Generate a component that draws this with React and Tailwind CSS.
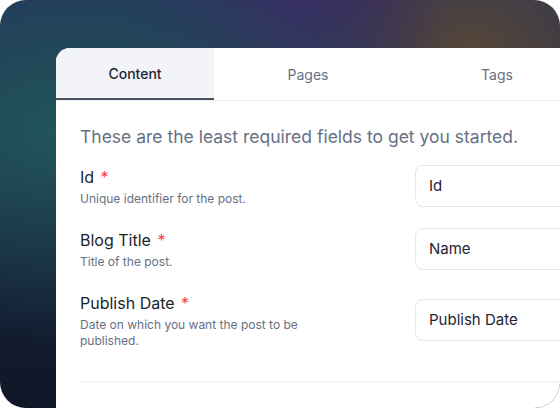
import React from 'react';

const fields = [
  { label: 'Id', hint: 'Unique identifier for the post.', placeholder: 'Id' },
  { label: 'Blog Title', hint: 'Title of the post.', placeholder: 'Name' },
  { label: 'Publish Date', hint: 'Date on which you want the post to be published.', placeholder: 'Publish Date' },
];

export default function App() {
  return (
    <div className="w-[560px] h-[408px] bg-white font-['Inter',sans-serif]">
      {/* Fondo con degradado */}
      <div className="w-[560px] h-[408px] overflow-hidden rounded-[26px] pl-[56px] pt-[48px] bg-[#131b2d] bg-[image:radial-gradient(ellipse_at_14%_32%,#22575c_0%,transparent_55%),radial-gradient(ellipse_at_52%_0%,#3a2763_0%,transparent_38%),radial-gradient(ellipse_at_84%_14%,#574737_0%,transparent_36%),linear-gradient(to_bottom,#24305c_0%,#16203a_55%,#0f1727_100%)]">
        <div className="w-[560px] h-[400px] bg-white rounded-tl-[14px] overflow-hidden">
          {/* Tabs */}
          <div className="flex border-b border-[#f1f2f4]">
            <div className="w-[158px] h-[52px] flex items-center justify-center bg-[#f3f4f8] border-b-2 border-[#4a5163] -mb-px text-[14px] font-medium text-[#1f2433]">
              Content
            </div>
            <div className="w-[188px] h-[52px] flex items-center justify-center text-[14px] text-[#667085]">
              Pages
            </div>
            <div className="w-[190px] h-[52px] flex items-center justify-center text-[14px] text-[#667085]">
              Tags
            </div>
          </div>

          {/* Formulario */}
          <div className="pl-[24px] pt-[22px]">
            <p className="text-[17.5px] leading-[28px] text-[#667085] whitespace-nowrap">
              These are the least required fields to get you started.
            </p>
            <div className="mt-[14px] flex flex-col gap-[21px]">
              {fields.map((f) => (
                <div key={f.label} className="flex items-center">
                  <div className="w-[335px] pr-[90px]">
                    <div className="text-[16px] leading-[24px] text-[#1a1f2c]">
                      {f.label} <span className="text-[#ef4444] ml-0.5">*</span>
                    </div>
                    <div className="mt-[2px] text-[12px] leading-[16px] text-[#667085]">{f.hint}</div>
                  </div>
                  <div className="w-[200px] h-[42px] flex items-center px-[13px] rounded-[8px] border border-[#e4e6eb] text-[15px] text-[#1f2433]">
                    {f.placeholder}
                  </div>
                </div>
              ))}
            </div>
            <div className="mt-[32px] h-[2px] bg-[#f3f4f6]" />
          </div>
        </div>
      </div>
    </div>
  );
}
